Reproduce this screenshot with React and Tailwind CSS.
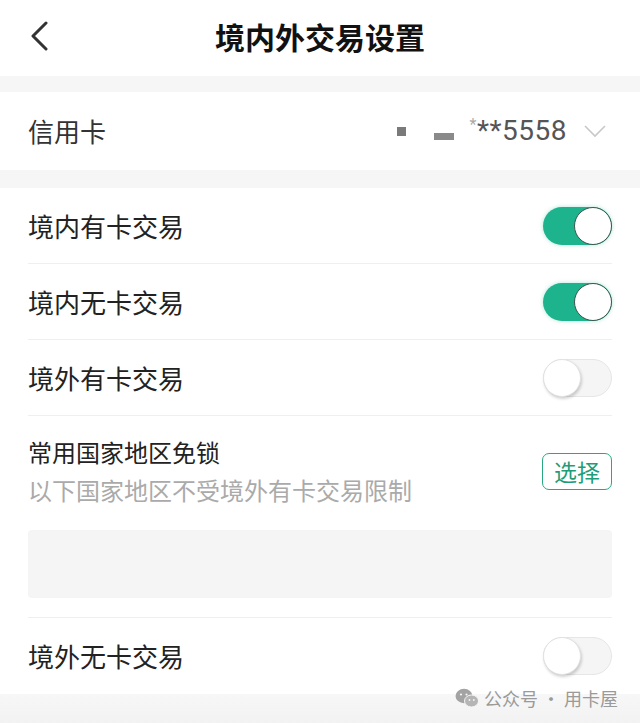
import React from 'react';

const font = { fontFamily: '"Noto Sans CJK SC", "Noto Sans", sans-serif' };

const Toggle = ({ on }) =>
  on ? (
    <div className="relative h-[38px] w-[69px] shrink-0 rounded-full bg-[#1db38c] shadow-[0_0_4px_rgba(29,179,140,0.35)]">
      <div className="absolute right-0 top-0 h-[38px] w-[38px] rounded-full border-[1.5px] border-[#3d5750] bg-white" />
    </div>
  ) : (
    <div className="relative h-[38px] w-[69px] shrink-0 rounded-full border border-[#e6e6e6] bg-[#f5f5f5]">
      <div className="absolute -left-px -top-px h-[38px] w-[38px] rounded-full border border-[#e2e2e2] bg-white shadow-[1px_2px_3px_rgba(0,0,0,0.18)]" />
    </div>
  );

const ToggleRow = ({ label, on, divider = true }) => (
  <div className={`flex h-[76px] items-center justify-between ${divider ? 'border-b border-[#efefef]' : ''}`}>
    <span className="text-[26px] leading-none text-[#222]">{label}</span>
    <Toggle on={on} />
  </div>
);

export default function App() {
  return (
    <div className="relative min-h-[723px] w-[640px] overflow-hidden bg-white" style={font}>
      {/* header */}
      <div className="grid h-[76px] grid-cols-[1fr_auto_1fr] items-center px-7">
        <svg width="22" height="30" viewBox="0 0 22 30" className="-mt-1">
          <path d="M18 2 L5 15 L18 28" fill="none" stroke="#333" strokeWidth="3" strokeLinecap="round" strokeLinejoin="round" />
        </svg>
        <h1 className="-mt-1 text-[30px] font-bold leading-none text-[#111]">境内外交易设置</h1>
        <div />
      </div>
      <div className="h-4 bg-[#f6f6f6]" />

      {/* card selector */}
      <div className="flex h-[78px] items-center justify-between pl-7 pr-[33px]">
        <span className="text-[26px] leading-none text-[#333]">信用卡</span>
        <div className="flex items-center">
          <div className="mr-7 h-[9px] w-[9px] bg-[#7a7a7a]" />
          <div className="mr-4 mt-[10px] h-[7px] w-[20px] bg-[#8a8a8a] blur-[0.6px]" />
          <span className="text-[28px] leading-none tracking-[0.5px] text-[#555]" style={{ fontFamily: '"Roboto", "Noto Sans", sans-serif' }}>
            <span className="text-[16px] align-top text-[#aaa]">*</span>**5558
          </span>
          <svg width="24" height="14" viewBox="0 0 24 14" className="ml-4">
            <path d="M2 2 L12 12 L22 2" fill="none" stroke="#c8c8c8" strokeWidth="1.6" />
          </svg>
        </div>
      </div>
      <div className="h-[18px] bg-[#f6f6f6]" />

      {/* switches */}
      <div className="px-7">
        <ToggleRow label="境内有卡交易" on />
        <ToggleRow label="境内无卡交易" on />
        <ToggleRow label="境外有卡交易" />

        <div className="border-b border-[#efefef] pb-[19px] pt-[22px]">
          <div className="flex items-center justify-between">
            <div className="flex flex-col gap-[10px]">
              <span className="text-[24px] leading-[28px] text-[#222]">常用国家地区免锁</span>
              <span className="text-[24px] leading-[28px] text-[#aaa]">以下国家地区不受境外有卡交易限制</span>
            </div>
            <button className="flex h-[37px] w-[70px] items-center justify-center rounded-[7px] border-[1.5px] border-[#2aa882] text-[23px] leading-none text-[#1f9d78]">
              选择
            </button>
          </div>
          <div className="mt-[26px] h-[68px] rounded-[4px] bg-[#f5f5f5]" />
        </div>

        <div className="flex h-[76px] items-center justify-between">
          <span className="text-[26px] leading-none text-[#222]">境外无卡交易</span>
          <Toggle />
        </div>
      </div>
      <div className="h-[30px] bg-gradient-to-b from-[#f7f7f7] to-[#f2f2f2]" />

      {/* watermark */}
      <div className="absolute bottom-[16px] right-[22px] flex items-center gap-[5px] text-[18px] leading-none text-[#9a9a9a]">
        <svg width="24" height="20" viewBox="0 0 24 20">
          <ellipse cx="9" cy="8" rx="8.5" ry="7.2" fill="#a3a3a3" />
          <ellipse cx="16.5" cy="13" rx="7" ry="6" fill="#b5b5b5" stroke="#f5f5f5" strokeWidth="1" />
          <circle cx="6" cy="6.5" r="1.1" fill="#f5f5f5" />
          <circle cx="11.5" cy="6.5" r="1.1" fill="#f5f5f5" />
          <circle cx="14.5" cy="12" r="0.9" fill="#f5f5f5" />
          <circle cx="18.8" cy="12" r="0.9" fill="#f5f5f5" />
        </svg>
        <span>公众号 · 用卡屋</span>
      </div>
    </div>
  );
}
